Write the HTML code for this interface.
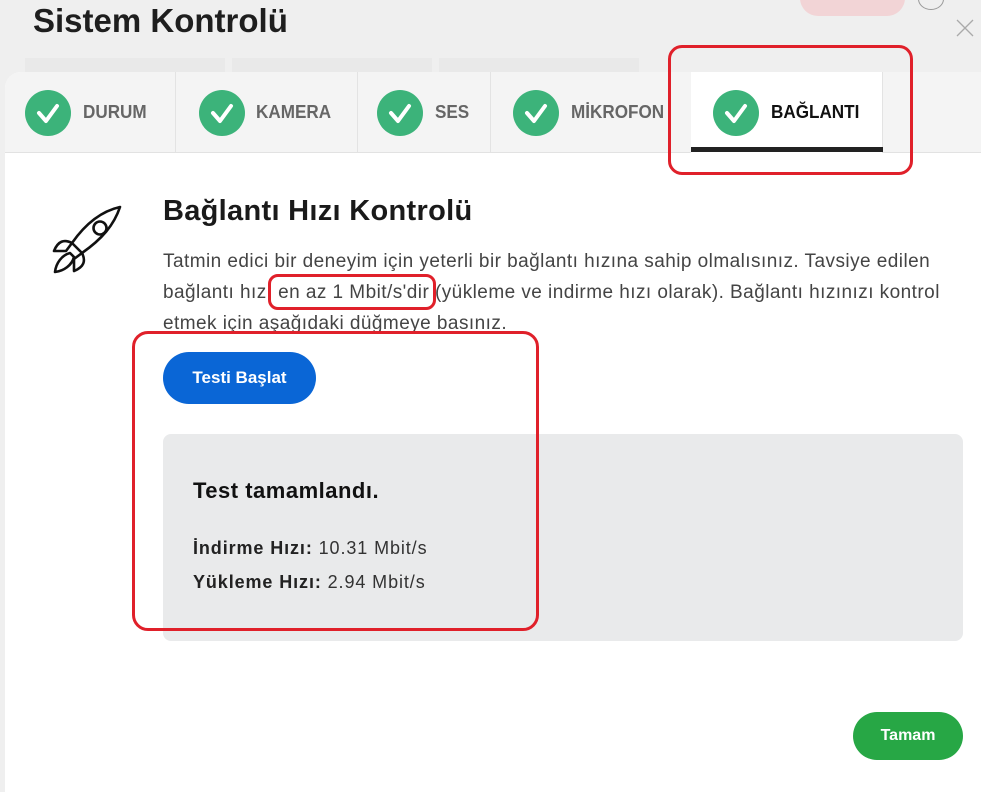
<!DOCTYPE html>
<html><head><meta charset="utf-8"><style>
*{margin:0;padding:0;box-sizing:border-box}
body{width:981px;height:766px;overflow:hidden;background:#efefef;font-family:"Liberation Sans",sans-serif;position:relative;color:#222}
.abs{position:absolute}
.modal{left:5px;top:72px;width:990px;height:720px;background:#fff;border-radius:16px 0 0 0;overflow:hidden}
.tabbar{left:0;top:0;width:990px;height:81px;background:#f4f4f4;border-bottom:1px solid #e2e2e2}
.tab{position:absolute;top:0;height:80px;border-right:1px solid #e3e3e3}
.chk{position:absolute;top:18px;width:46px;height:46px;border-radius:50%;background:#3cb37a}
.chk svg{position:absolute;left:0;top:0}
.tl{position:absolute;top:30px;font-size:18px;font-weight:bold;color:#666;transform:scaleX(.95);transform-origin:left}
.red{position:absolute;border:3px solid #e0202a}
.p{position:absolute;left:163px;font-size:19px;letter-spacing:.45px;color:#444;white-space:nowrap}
</style></head><body>
<div class="abs" style="left:33px;top:2px;font-size:33px;font-weight:bold;color:#1e1e1e">Sistem Kontrolü</div>
<div class="abs" style="left:800px;top:-20px;width:105px;height:36px;border-radius:18px;background:#f2d4d6"></div>
<div class="abs" style="left:918px;top:-12px;width:26px;height:22px;border-radius:50%;border:1.5px solid #999"></div>
<svg class="abs" style="left:956px;top:19px" width="18" height="18"><path d="M1 1L17 17M17 1L1 17" stroke="#aaa" stroke-width="1.3"/></svg>
<div class="abs" style="left:25px;top:58px;width:200px;height:20px;background:#e9e9e9"></div>
<div class="abs" style="left:232px;top:58px;width:200px;height:20px;background:#e9e9e9"></div>
<div class="abs" style="left:439px;top:58px;width:200px;height:20px;background:#e9e9e9"></div>

<div class="abs modal">
 <div class="abs tabbar">
  <div class="tab" style="left:0;width:171px"><div class="chk" style="left:20px"><svg width="46" height="46"><path d="M14 23l7 8 11-15" stroke="#fff" stroke-width="4" fill="none" stroke-linecap="round" stroke-linejoin="round"/></svg></div><div class="tl" style="left:78px">DURUM</div></div>
  <div class="tab" style="left:171px;width:182px"><div class="chk" style="left:23px"><svg width="46" height="46"><path d="M14 23l7 8 11-15" stroke="#fff" stroke-width="4" fill="none" stroke-linecap="round" stroke-linejoin="round"/></svg></div><div class="tl" style="left:80px">KAMERA</div></div>
  <div class="tab" style="left:353px;width:133px"><div class="chk" style="left:19px"><svg width="46" height="46"><path d="M14 23l7 8 11-15" stroke="#fff" stroke-width="4" fill="none" stroke-linecap="round" stroke-linejoin="round"/></svg></div><div class="tl" style="left:77px">SES</div></div>
  <div class="tab" style="left:486px;width:200px;border:none"><div class="chk" style="left:22px"><svg width="46" height="46"><path d="M14 23l7 8 11-15" stroke="#fff" stroke-width="4" fill="none" stroke-linecap="round" stroke-linejoin="round"/></svg></div><div class="tl" style="left:80px">MİKROFON</div></div>
  <div class="tab" style="left:686px;width:192px;background:#fff;height:81px"><div class="chk" style="left:22px"><svg width="46" height="46"><path d="M14 23l7 8 11-15" stroke="#fff" stroke-width="4" fill="none" stroke-linecap="round" stroke-linejoin="round"/></svg></div><div class="tl" style="left:80px;color:#111">BAĞLANTI</div><div class="abs" style="left:0;top:75px;width:192px;height:5px;background:#222"></div></div>
 </div>
</div>

<svg class="abs" style="left:40px;top:195px" width="90" height="85" viewBox="0 0 90 85" fill="none" stroke="#111" stroke-width="2.6" stroke-linejoin="round">
 <path d="M80 12C62 16 46 28 32 48L42 58C62 44 74 30 80 12Z"/>
 <circle cx="60" cy="33" r="6.5"/>
 <path d="M32 48C24 44 18 46 14 56L26 56Z"/>
 <path d="M42 58C46 66 44 72 34 76L34 64Z"/>
 <path d="M30 58C22 60 16 68 15 77C24 76 32 70 34 62Z"/>
</svg>

<div class="abs" style="left:163px;top:195px;font-size:29px;font-weight:bold;color:#1a1a1a;letter-spacing:.3px">Bağlantı Hızı Kontrolü</div>
<div class="p" style="top:251px">Tatmin edici bir deneyim için yeterli bir bağlantı hızına sahip olmalısınız. Tavsiye edilen</div>
<div class="p" style="top:282px">bağlantı hızı en az 1 Mbit/s'dir (yükleme ve indirme hızı olarak). Bağlantı hızınızı kontrol</div>
<div class="p" style="top:313px">etmek için aşağıdaki düğmeye basınız.</div>

<div class="abs" style="left:163px;top:352px;width:153px;height:52px;border-radius:26px;background:#0a66d6;color:#fff;font-weight:bold;font-size:17px;text-align:center;line-height:52px">Testi Başlat</div>

<div class="abs" style="left:163px;top:434px;width:800px;height:207px;border-radius:8px;background:#e9eaeb"></div>
<div class="abs" style="left:193px;top:478px;font-size:22px;font-weight:bold;color:#111;letter-spacing:.5px">Test tamamlandı.</div>
<div class="abs" style="left:193px;top:538px;font-size:18px;color:#333;letter-spacing:.9px"><b style="color:#222">İndirme Hızı:</b> 10.31 Mbit/s</div>
<div class="abs" style="left:193px;top:572px;font-size:18px;color:#333;letter-spacing:.9px"><b style="color:#222">Yükleme Hızı:</b> 2.94 Mbit/s</div>

<div class="abs" style="left:853px;top:712px;width:110px;height:48px;border-radius:24px;background:#27a745;color:#fff;font-weight:bold;font-size:16px;text-align:center;line-height:48px">Tamam</div>

<div class="red" style="left:668px;top:45px;width:245px;height:130px;border-radius:14px"></div>
<div class="red" style="left:268px;top:274px;width:168px;height:36px;border-radius:10px"></div>
<div class="red" style="left:132px;top:331px;width:407px;height:300px;border-radius:16px"></div>
</body></html>
